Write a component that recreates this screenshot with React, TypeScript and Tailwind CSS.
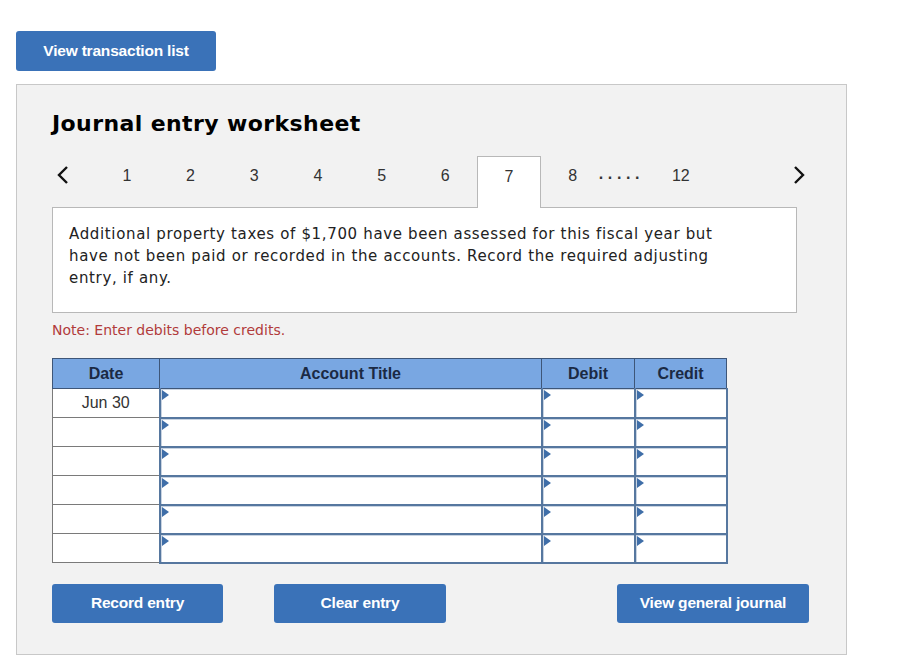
import React from "react";

const tabs = ["1", "2", "3", "4", "5", "6", "7"];
const rows = ["Jun 30", "", "", "", "", ""];

const Flag = () => (
  <svg className="absolute left-0 top-0" width="7" height="10" viewBox="0 0 7 10">
    <path d="M0 0 L7 5 L0 10 Z" fill="#3f6ea8" />
  </svg>
);

const InputCell = ({ last }: { last?: boolean }) => (
  <td className={`p-0 h-[29px] border-l-2 border-b-2 border-[#56779f] ${last ? "border-r-2" : ""}`}>
    <div className="relative h-full bg-white border-t border-l border-[#c9d4e2]">
      <Flag />
    </div>
  </td>
);

const BlueButton = ({ label, w }: { label: string; w: string }) => (
  <button
    className={`${w} h-[39px] rounded-[3px] bg-[#3a72b8] text-white text-[15.5px] font-bold tracking-[-0.2px]`}
    style={{ fontFamily: "'Liberation Sans', Arial, sans-serif" }}
  >
    {label}
  </button>
);

export default function App() {
  return (
    <div className="min-h-[669px] bg-white pt-[31px] pl-4" style={{ fontFamily: "'DejaVu Sans', Verdana, sans-serif" }}>
      <button
        className="w-[200px] h-10 rounded-[3px] bg-[#3a72b8] text-white text-[15.5px] font-bold tracking-[-0.2px]"
        style={{ fontFamily: "'Liberation Sans', Arial, sans-serif" }}
      >
        View transaction list
      </button>

      <div className="mt-[13px] w-[831px] border border-[#c8c8c8] bg-[#f2f2f2] pl-[35px] pr-[49px] pt-[24px] pb-[31px]">
        <h1 className="text-[22px] leading-[30px] font-bold tracking-[0.4px] text-black">Journal entry worksheet</h1>

        {/* step tabs */}
        <div
          className="mt-[17px] flex h-[51px] items-start text-[16px] text-[#333]"
          style={{ fontFamily: "'Liberation Sans', Arial, sans-serif" }}
        >
          <div className="w-[43px] h-full flex items-center pl-[5px] pb-[14px]">
            <svg width="12" height="20" viewBox="0 0 12 20">
              <path d="M10 2 L2 10 L10 18" fill="none" stroke="#111" strokeWidth="2.4" />
            </svg>
          </div>
          {tabs.map((t) => (
            <div
              key={t}
              className={`w-[63.7px] flex justify-center pt-[8px] ${
                t === "7"
                  ? "relative z-10 h-[52px] bg-white border border-b-0 border-[#b8b8b8]"
                  : "h-full"
              }`}
            >
              {t}
            </div>
          ))}
          <div className="w-[56px] flex justify-center pt-[8px] pl-[8px]">8</div>
          <div className="w-[48px] pt-[6px] pl-[2px] text-[16px] font-bold tracking-[4.6px] text-[#333]">.....</div>
          <div className="w-[72px] flex justify-center pt-[8px]">12</div>
          <div className="flex-1" />
          <div className="w-[20px] h-full flex items-center justify-end pb-[14px] mr-[-8px]">
            <svg width="12" height="20" viewBox="0 0 12 20">
              <path d="M2 2 L10 10 L2 18" fill="none" stroke="#111" strokeWidth="2.4" />
            </svg>
          </div>
        </div>

        <div className="h-[106px] bg-white border border-[#b8b8b8] pl-4 pr-2 pt-[15px] text-[15px] leading-[22px] tracking-[0.65px] text-[#222]">
          Additional property taxes of $1,700 have been assessed for this fiscal year but
          <br />
          have not been paid or recorded in the accounts. Record the required adjusting
          <br />
          entry, if any.
        </div>

        <p className="mt-[7px] text-[14px] leading-5 text-[#b13b3b]">Note: Enter debits before credits.</p>

        <table
          className="mt-[18px] border-collapse w-[674px] table-fixed"
          style={{ fontFamily: "'Liberation Sans', Arial, sans-serif" }}
        >
          <colgroup>
            <col className="w-[107px]" />
            <col className="w-[382px]" />
            <col className="w-[93px]" />
            <col className="w-[92px]" />
          </colgroup>
          <thead>
            <tr className="h-[30px] bg-[#79a7e2] text-[16px] font-bold text-[#1b2a44]">
              <th className="border border-[#3e5678] font-bold">Date</th>
              <th className="border border-[#3e5678] font-bold">Account Title</th>
              <th className="border border-[#3e5678] font-bold">Debit</th>
              <th className="border border-[#3e5678] font-bold">Credit</th>
            </tr>
          </thead>
          <tbody>
            {rows.map((d, i) => (
              <tr key={i}>
                <td className="h-[29px] p-0 bg-white border border-[#7a7a7a] text-center text-[16px] text-[#333] align-top pt-[2px]">
                  {d}
                </td>
                <InputCell />
                <InputCell />
                <InputCell last />
              </tr>
            ))}
          </tbody>
        </table>

        <div className="mt-[20px] flex">
          <BlueButton label="Record entry" w="w-[171px]" />
          <div className="w-[51px]" />
          <BlueButton label="Clear entry" w="w-[172px]" />
          <div className="flex-1" />
          <div className="mr-[-12px]">
            <BlueButton label="View general journal" w="w-[192px]" />
          </div>
        </div>
      </div>
    </div>
  );
}
